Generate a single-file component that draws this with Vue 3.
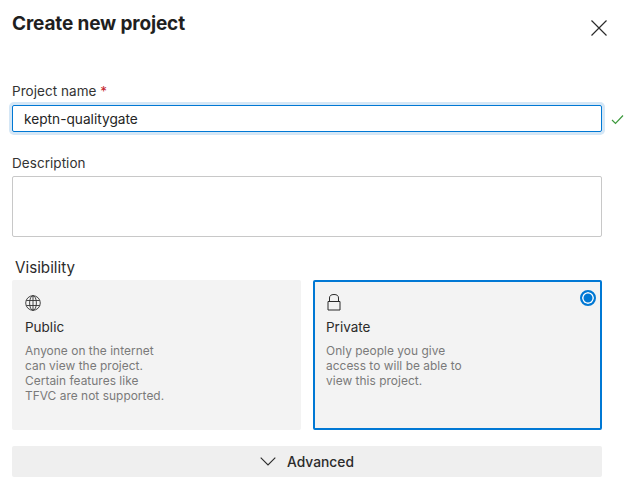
<template>
  <div class="dialog">
    <header class="head">
      <h1>Create new project</h1>
      <button class="close" aria-label="Close">
        <svg width="18" height="18" viewBox="0 0 18 18"><path d="M1.500 1.500l15 15M16.500 1.500l-15 15" stroke="#2b2b2b" stroke-width="1.200" fill="none" /></svg>
      </button>
    </header>

    <div class="field name-field">
      <label>Project name <span class="req">*</span></label>
      <div class="input-row">
        <input class="name-input" type="text" v-model="name" />
        <svg class="check" width="13" height="11" viewBox="0 0 13 11"><path d="M1 6l3.500 3.500L12 1.500" stroke="#3d9a3d" stroke-width="1.200" fill="none" /></svg>
      </div>
    </div>

    <div class="field desc-field">
      <label>Description</label>
      <textarea class="desc-input"></textarea>
    </div>

    <div class="vis-label">Visibility</div>
    <div class="cards">
      <div v-for="c in cards" :key="c.title" class="card" :class="{ selected: c.selected }">
        <svg v-if="c.icon === 'globe'" class="icon" width="16" height="16" viewBox="0 0 16 16" fill="none" stroke="#333" stroke-width="0.9">
          <circle cx="8" cy="8" r="7.300" />
          <ellipse cx="8" cy="8" rx="3.400" ry="7.300" />
          <path d="M8 .7v14.600M1.300 5.500h13.400M1.300 10.500h13.400" />
        </svg>
        <svg v-else class="icon" width="16" height="16" viewBox="0 0 16 16" fill="none" stroke="#2b2b2b" stroke-width="1">
          <path d="M2 6.500h12v8.500H2zM3.500 6.500V3a4.500 3.500 0 0 1 9 0v3.500" />
        </svg>
        <div class="card-title">{{ c.title }}</div>
        <div class="card-text">
          <div v-for="line in c.lines" :key="line">{{ line }}</div>
        </div>
        <span v-if="c.selected" class="radio"></span>
      </div>
    </div>

    <div class="advanced">
      <svg width="16" height="9" viewBox="0 0 16 9"><path d="M.7.7L8 8l7.300-7.300" stroke="#2b2b2b" stroke-width="1.100" fill="none" /></svg>
      <span>Advanced</span>
    </div>
  </div>
</template>

<script setup>
import { ref } from 'vue'

const name = ref('keptn-qualitygate')

const cards = [
  {
    title: 'Public',
    icon: 'globe',
    selected: false,
    lines: ['Anyone on the internet', 'can view the project.', 'Certain features like', 'TFVC are not supported.']
  },
  {
    title: 'Private',
    icon: 'lock',
    selected: true,
    lines: ['Only people you give', 'access to will be able to', 'view this project.']
  }
]
</script>

<style scoped>
.dialog {
  width: 624px;
  height: 483px;
  box-sizing: border-box;
  padding: 0 22px 0 12px;
  background: #fff;
  overflow: hidden;
  font-family: Inter, "Liberation Sans", sans-serif;
  color: #242424;
}

.head {
  position: relative;
  height: 48px;
}

.head h1 {
  margin: 0;
  padding-top: 13px;
  font-size: 19px;
  line-height: 22px;
  font-weight: 700;
  letter-spacing: -0.14px;
  color: #1f1f1f;
}

.close {
  position: absolute;
  top: 19px;
  right: -6px;
  width: 18px;
  height: 18px;
  padding: 0;
  border: none;
  background: none;
}

.field label {
  display: block;
  font-size: 13.500px;
  line-height: 16px;
  letter-spacing: 0.05px;
  color: #333;
}

.req {
  color: #c4262e;
}

.name-field {
  margin-top: 35px;
}

.input-row {
  position: relative;
  margin-top: 6px;
}

.name-input {
  display: block;
  width: 100%;
  height: 27px;
  box-sizing: border-box;
  padding: 0 11px;
  border: 1px solid #0078d4;
  border-radius: 2px;
  box-shadow: 0 0 0 3px #d5e7f6;
  outline: none;
  font: inherit;
  font-weight: 400;
  font-size: 13.700px;
  color: #242424;
}

.check {
  position: absolute;
  top: 9px;
  left: 599px;
}

.desc-field {
  margin-top: 23px;
}

.desc-input {
  display: block;
  width: 100%;
  height: 61px;
  box-sizing: border-box;
  margin-top: 5px;
  border: 1px solid #c8c8c8;
  border-radius: 2px;
  resize: none;
  outline: none;
}

.vis-label {
  margin: 22px 0 3px 3px;
  font-size: 15.200px;
  line-height: 18px;
  color: #2b2b2b;
}

.cards {
  display: grid;
  grid-template-columns: 289px 289px;
  gap: 12px;
}

.card {
  position: relative;
  height: 150px;
  box-sizing: border-box;
  padding: 15px 13px;
  background: #f3f3f3;
  border-radius: 2px;
}

.card.selected {
  border: 2px solid #0078d4;
  padding: 13px 11px;
}

.icon {
  display: block;
  overflow: visible;
}

.card-title {
  margin-top: 8px;
  font-size: 13.500px;
  line-height: 16px;
  color: #2b2b2b;
}

.card-text {
  margin-top: 8px;
  font-size: 11.900px;
  line-height: 15px;
  letter-spacing: 0.04px;
  color: #7a7a7a;
}

.radio {
  position: absolute;
  top: 8px;
  right: 4px;
  width: 16px;
  height: 16px;
  box-sizing: border-box;
  border: 2px solid #0078d4;
  border-radius: 50%;
  background: #0078d4;
  box-shadow: inset 0 0 0 1.500px #fff;
}

.advanced {
  display: flex;
  align-items: center;
  justify-content: center;
  gap: 11px;
  height: 31px;
  margin-top: 16px;
  background: #efefef;
  border-radius: 2px;
  font-size: 13.800px;
  font-weight: 500;
  color: #2b2b2b;
}
</style>
